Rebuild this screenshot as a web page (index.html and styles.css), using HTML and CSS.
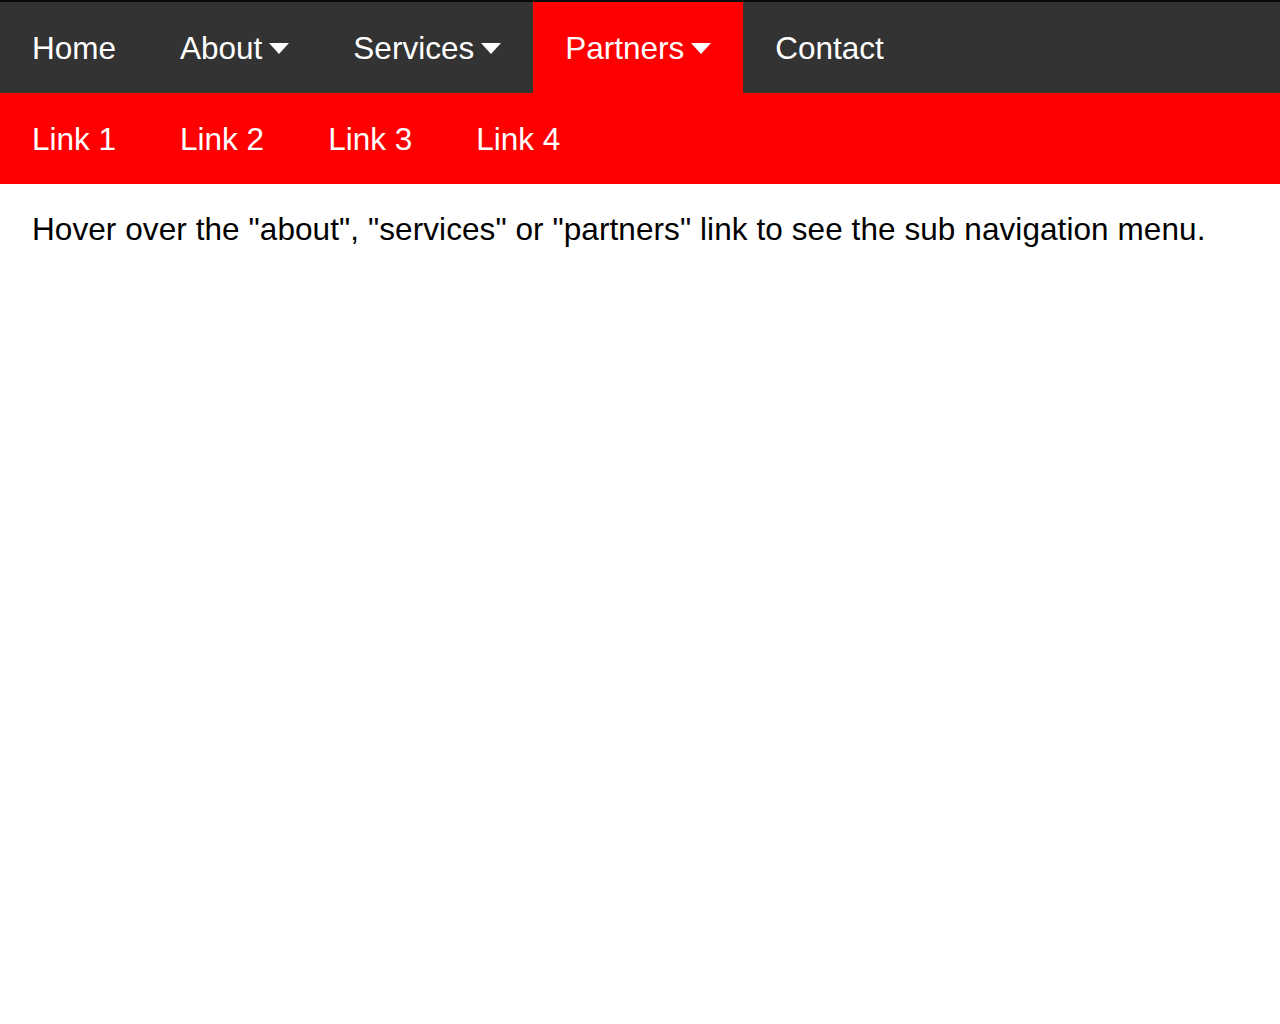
FILE: index.html
```html
<!DOCTYPE html>
<html>
<head>
<meta charset="utf-8">
<link rel="stylesheet" href="styles.css">
</head>
<body>
<nav class="navbar">
  <a class="nav-item" href="#home">Home</a>
  <a class="nav-item" href="#about">About<svg class="caret" viewBox="0 0 20 11"><path d="M0 0h20L10 11z"/></svg></a>
  <a class="nav-item" href="#services">Services<svg class="caret" viewBox="0 0 20 11"><path d="M0 0h20L10 11z"/></svg></a>
  <a class="nav-item active" href="#partners">Partners<svg class="caret" viewBox="0 0 20 11"><path d="M0 0h20L10 11z"/></svg></a>
  <a class="nav-item" href="#contact">Contact</a>
</nav>
<div class="subnav">
  <a class="sub-item" href="#link1">Link 1</a>
  <a class="sub-item" href="#link2">Link 2</a>
  <a class="sub-item" href="#link3">Link 3</a>
  <a class="sub-item" href="#link4">Link 4</a>
</div>
<p class="intro">Hover over the "about", "services" or "partners" link to see the sub navigation menu.</p>
</body>
</html>
```

FILE: styles.css
```css
html, body {
  margin: 0;
  padding: 0;
  background: #ffffff;
}
body {
  font-family: "Liberation Sans", Arial, sans-serif;
  font-size: 31.5px;
  color: #000;
}
.navbar {
  display: flex;
  background: #333333;
  border-top: 2px solid #0a0a0a;
  height: 91px;
}
.nav-item {
  display: flex;
  align-items: center;
  padding: 2px 32px 0;
  color: #ffffff;
  text-decoration: none;
  line-height: 1;
}
.nav-item.active {
  background: #ff0000;
}
.caret {
  width: 20px;
  height: 11px;
  margin-left: 7px;
  fill: #ffffff;
}
.subnav {
  display: flex;
  background: #ff0000;
  height: 91px;
}
.sub-item {
  display: flex;
  align-items: center;
  padding: 2px 32px 0;
  color: #ffffff;
  text-decoration: none;
  line-height: 1;
}
.intro {
  margin: 27px 0 0;
  padding: 0 32px;
  line-height: 36px;
  letter-spacing: 0.08px;
}
```
